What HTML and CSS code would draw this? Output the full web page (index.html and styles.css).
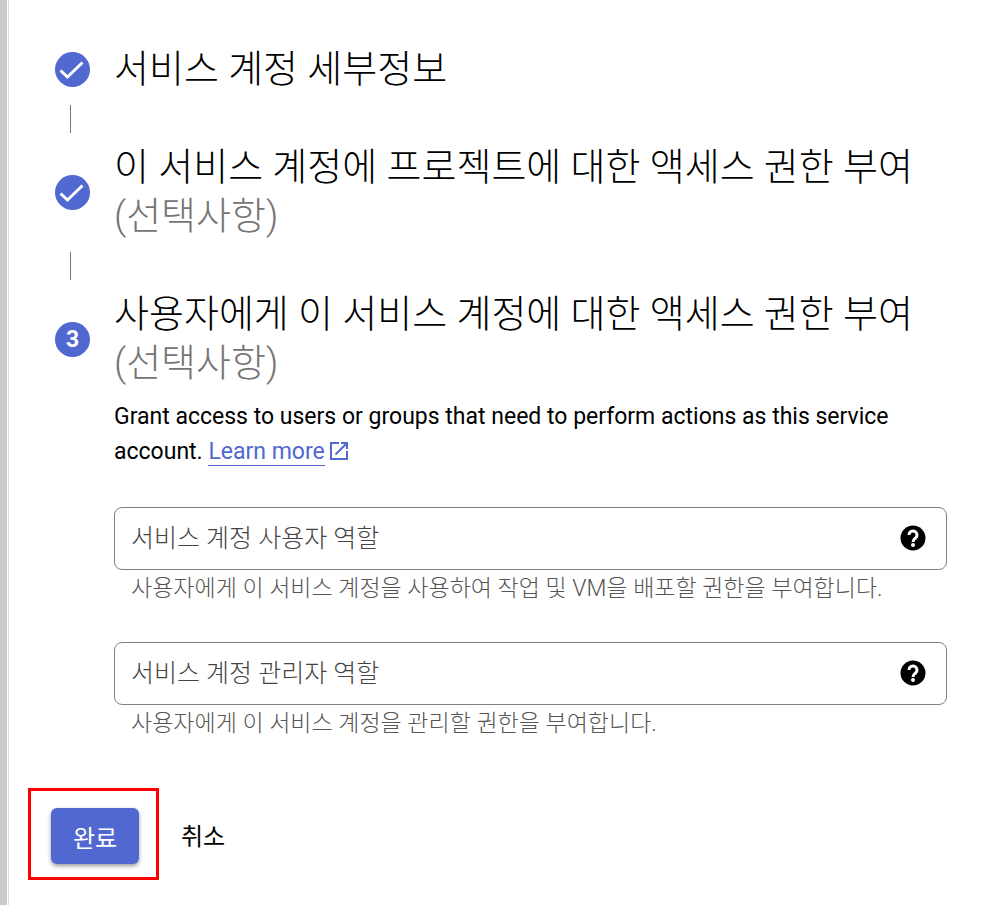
FILE: index.html
```
<!DOCTYPE html>
<html lang="ko">
<head>
  <meta charset="UTF-8" />
  <meta name="viewport" content="width=device-width, initial-scale=1.0"/>
  <title>서비스 계정 만들기</title>
  <link rel="stylesheet" href="styles.css">
</head>
<body>
  <main class="panel">
    <!-- Steps -->
    <section class="step">
      <span class="badge">
        <svg viewBox="0 0 35 35"><path d="M5.500 18.500l7 6.500L27.500 10.500"/></svg>
      </span>
      <h2>서비스 계정 세부정보</h2>
    </section>
    <div class="connector"></div>

    <section class="step">
      <span class="badge">
        <svg viewBox="0 0 35 35"><path d="M5.500 18.500l7 6.500L27.500 10.500"/></svg>
      </span>
      <h2>이 서비스 계정에 프로젝트에 대한 액세스 권한 부여 <span class="optional">(선택사항)</span></h2>
    </section>
    <div class="connector"></div>

    <section class="step">
      <span class="badge">3</span>
      <h2>사용자에게 이 서비스 계정에 대한 액세스 권한 부여 <span class="optional">(선택사항)</span></h2>
    </section>

    <form class="content" id="accessForm">
      <p class="intro">Grant access to users or groups that need to perform actions as this service
        account. <a href="#"><span class="link-text">Learn more</span><svg class="launch" viewBox="0 0 24 24"><path d="M19 19H5V5h7V3H3v18h18v-9h-2zM14 3v2h3.600l-9.800 9.800 1.400 1.400L19 6.400V10h2V3z"/></svg></a>
      </p>

      <div class="field">
        <div class="box">
          <input type="text" id="userRole" placeholder="서비스 계정 사용자 역할" aria-label="서비스 계정 사용자 역할" aria-describedby="userHint">
          <button type="button" class="help" aria-label="도움말">
            <svg viewBox="0 0 30 30"><circle cx="15" cy="14" r="12.500"/><path d="M11 11a4 4 0 1 1 6.600 3C16 15.300 15 15.800 15 18"/><circle class="dot" cx="15" cy="21" r="2"/></svg>
          </button>
        </div>
        <div class="hint" id="userHint">사용자에게 이 서비스 계정을 사용하여 작업 및 VM을 배포할 권한을 부여합니다.</div>
      </div>

      <div class="field">
        <div class="box">
          <input type="text" id="adminRole" placeholder="서비스 계정 관리자 역할" aria-label="서비스 계정 관리자 역할" aria-describedby="adminHint">
          <button type="button" class="help" aria-label="도움말">
            <svg viewBox="0 0 30 30"><circle cx="15" cy="14" r="12.500"/><path d="M11 11a4 4 0 1 1 6.600 3C16 15.300 15 15.800 15 18"/><circle class="dot" cx="15" cy="21" r="2"/></svg>
          </button>
        </div>
        <div class="hint" id="adminHint">사용자에게 이 서비스 계정을 관리할 권한을 부여합니다.</div>
      </div>
    </form>

    <!-- Actions -->
    <div class="actions">
      <div class="highlight"><button type="submit" form="accessForm" class="done">완료</button></div>
      <button type="button" class="cancel">취소</button>
    </div>
  </main>
</body>
</html>
```

FILE: styles.css
```
* {
  box-sizing: border-box;
}
body {
  margin: 0;
  border-left: 7px solid #cacaca;
  padding-left: 1px;
  background-color: #fff;
  color: #000;
  font-family: Roboto, "Noto Sans CJK KR", sans-serif;
  font-size: 23px;
}
.panel {
  min-height: 100vh;
  border-left: 1px solid #dadada;
  padding: 45px 59px 20px 19px;
}
.step {
  display: flex;
  align-items: center;
  gap: 24px;
  padding-left: 27px;
}
.badge {
  flex: none;
  display: flex;
  align-items: center;
  justify-content: center;
  width: 35px;
  height: 35px;
  border-radius: 50%;
  background-color: #5068d0;
  color: #fff;
  font-weight: bold;
}
.badge svg {
  width: 35px;
  height: 35px;
  fill: none;
  stroke: #fff;
  stroke-width: 3;
}
h2 {
  margin: 0;
  font-size: 38px;
  font-weight: 300;
  line-height: 49px;
}
.optional {
  color: #757575;
  white-space: nowrap;
}
.connector {
  width: 1px;
  height: 28px;
  margin: 11px 0 10px 42px;
  background-color: #757575;
}
.content {
  padding-left: 86px;
}
.intro {
  margin: 11px 0 38px;
  line-height: 35px;
}
.intro a {
  color: #5068d0;
  text-decoration: none;
}
.link-text {
  border-bottom: 1px solid #5068d0;
}
.launch {
  width: 24px;
  height: 24px;
  margin-left: 2px;
  vertical-align: -4px;
  fill: #5068d0;
}
.box {
  display: flex;
  align-items: center;
  height: 63px;
  padding: 0 18px 0 16px;
  border: 1px solid #808085;
  border-radius: 8px;
}
.box input {
  flex: 1;
  min-width: 0;
  padding: 0;
  border: none;
  outline: none;
  background: none;
  font: inherit;
  font-size: 25px;
  font-weight: 300;
}
.box input::placeholder {
  color: #444;
  opacity: 1;
}
.help {
  width: 30px;
  height: 30px;
  padding: 0;
  border: none;
  background: none;
}
.help svg {
  display: block;
}
.help path {
  fill: none;
  stroke: #fff;
  stroke-width: 3;
}
.help .dot {
  fill: #fff;
}
.hint {
  margin-bottom: 36px;
  padding: 2px 0 0 17px;
  color: #555;
  font-weight: 300;
  line-height: 34px;
}
.actions {
  display: flex;
  align-items: center;
  gap: 22px;
  margin-top: 47px;
}
.highlight {
  padding: 17px 17px 13px 20px;
  border: 3px solid #f00;
}
.actions button {
  display: block;
  height: 56px;
  border: none;
  font: inherit;
  font-size: 24px;
}
.actions .done {
  width: 88px;
  border-radius: 6px;
  background-color: #5068d0;
  color: #fff;
  box-shadow: 0 2px 4px rgba(0, 0, 0, 0.4);
}
.actions .cancel {
  padding: 0;
  background: none;
}
```
